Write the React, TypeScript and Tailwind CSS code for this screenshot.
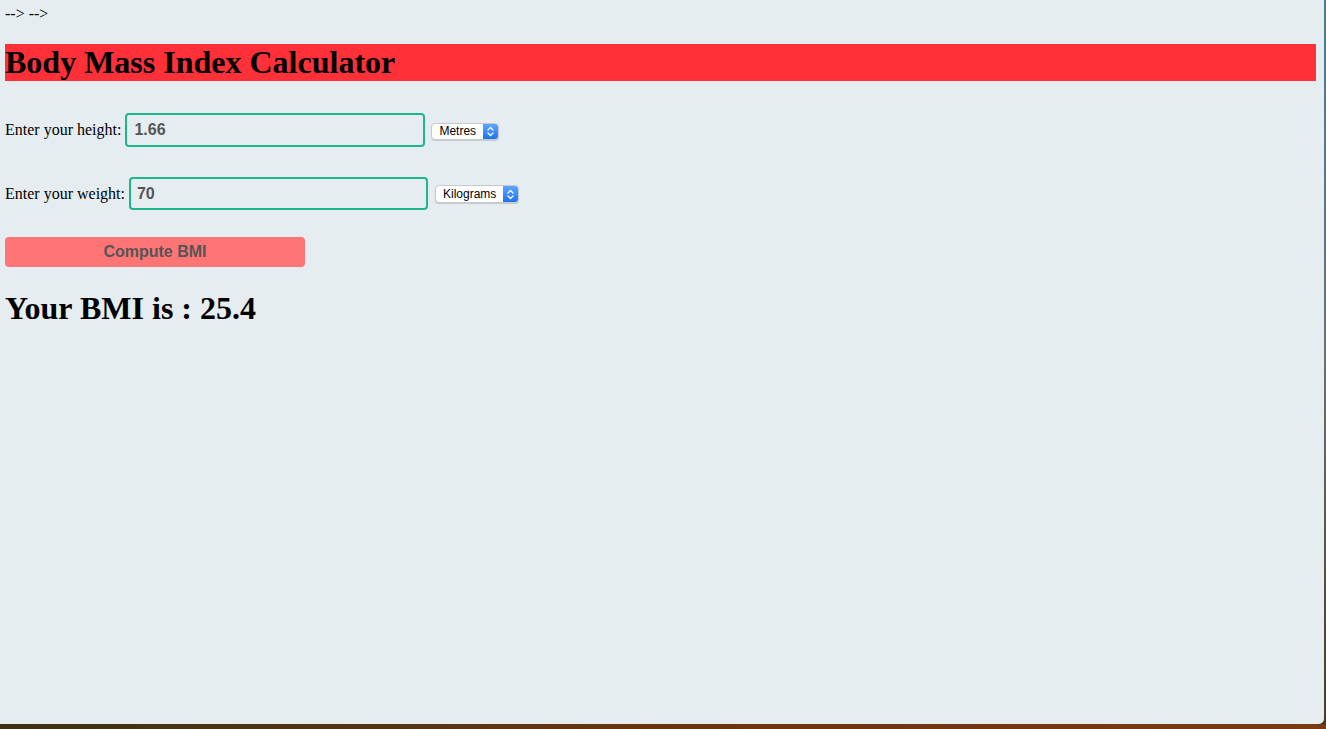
import React from "react";

function MacSelect({ label, width }: { label: string; width: string }) {
  return (
    <div
      className={`${width} flex items-stretch rounded-[4px] bg-white border border-[#c8c8c8] shadow-[0_1px_1px_rgba(0,0,0,0.15)] overflow-hidden`}
    >
      <div className="flex-1 flex items-center pl-[7px] text-[12px] leading-none text-black" style={{ fontFamily: '"Liberation Sans", Arial, sans-serif' }}>
        {label}
      </div>
      <div className="w-[15px] flex items-center justify-center bg-gradient-to-b from-[#5aa6ff] to-[#1a74f0]">
        <svg width="7" height="11" viewBox="0 0 7 11" fill="none">
          <path d="M1 4 L3.5 1.5 L6 4" stroke="white" strokeWidth="1.3" strokeLinecap="round" strokeLinejoin="round" />
          <path d="M1 7 L3.5 9.5 L6 7" stroke="white" strokeWidth="1.3" strokeLinecap="round" strokeLinejoin="round" />
        </svg>
      </div>
    </div>
  );
}

export default function App() {
  const serif = { fontFamily: '"Liberation Serif", "Times New Roman", serif' };
  const sans = { fontFamily: '"Liberation Sans", Arial, sans-serif' };
  return (
    <div className="w-[1326px] h-[729px] flex flex-col bg-[#3b2a10] overflow-hidden">
      <div className="flex h-[724px]">
        <div className="w-[1324px] h-[724px] bg-[#e5edf0] rounded-br-[5px] pl-[5px] pr-[8px] pt-[5px] text-black" style={serif}>
          <div className="text-[16px] leading-[18px]">--&gt; --&gt;</div>
          <h1 className="mt-[21px] h-[37px] bg-[#ff3038] text-[32px] leading-[37px] font-bold">Body Mass Index Calculator</h1>

          <div className="mt-[32px] h-[34px] flex items-center">
            <span className="text-[16px] leading-[18px]">Enter your height:</span>
            <div className="ml-[4px] w-[300px] h-[34px] border-2 border-[#1fb68c] rounded-[4px] flex items-center pl-[7px] text-[16px] font-bold text-[#555]" style={sans}>
              1.66
            </div>
            <div className="ml-[6px] mt-[2px]">
              <MacSelect label="Metres" width="w-[68px] h-[17px]" />
            </div>
          </div>

          <div className="mt-[30px] h-[33px] flex items-center">
            <span className="text-[16px] leading-[18px]">Enter your weight:</span>
            <div className="ml-[4px] w-[299px] h-[33px] border-2 border-[#1fb68c] rounded-[4px] flex items-center pl-[6px] text-[16px] font-bold text-[#555]" style={sans}>
              70
            </div>
            <div className="ml-[7px] mt-[1px]">
              <MacSelect label="Kilograms" width="w-[84px] h-[18px]" />
            </div>
          </div>

          <div className="mt-[27px] w-[300px] h-[30px] rounded-[4px] bg-[#ff7474] flex items-center justify-center text-[16px] font-bold text-[#555]" style={sans}>
            Compute BMI
          </div>

          <h2 className="mt-[23px] h-[37px] text-[32px] leading-[37px] font-bold">Your BMI is : 25.4</h2>
        </div>
        <div className="w-[2px] h-[724px] bg-gradient-to-b from-[#3f7f9a] via-[#6b6f74] to-[#4a3a20]"></div>
      </div>
      <div className="h-[5px] bg-gradient-to-r from-[#3a3212] via-[#6a3410] to-[#7a3a12]"></div>
    </div>
  );
}
